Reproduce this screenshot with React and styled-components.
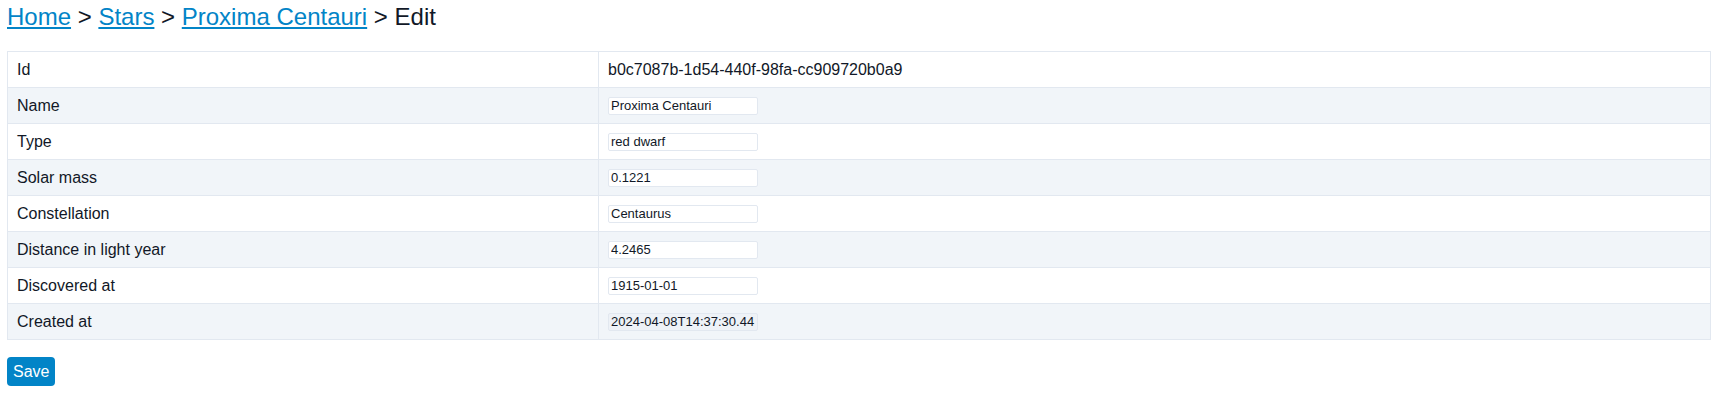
import React from "react";
import styled, { createGlobalStyle } from "styled-components";

const GlobalStyle = createGlobalStyle`
  body {
    margin: 0;
    background: #fff;
    font-family: "Liberation Sans", Arial, sans-serif;
    color: #111827;
  }
`;

const Page = styled.div`
  padding: 3px 7px 10px;
`;

const Breadcrumb = styled.div`
  font-size: 24px;
  line-height: 28px;
  color: #111827;

  a {
    color: #0284c7;
    text-decoration: underline;
    text-underline-offset: 2px;
  }
`;

const Table = styled.table`
  width: 100%;
  margin-top: 20px;
  border-collapse: collapse;
  border: 1px solid #e2e8f0;
  font-size: 16px;

  tr:nth-child(even) {
    background-color: #f1f5f9;
  }

  td {
    height: 35px;
    padding: 0 9px;
    border: 1px solid #e2e8f0;
    vertical-align: middle;
  }

  td:first-child {
    width: 572px;
  }
`;

const Field = styled.input`
  box-sizing: border-box;
  width: 150px;
  height: 18px;
  padding: 0 2px;
  border: 1px solid #e2e8f0;
  border-radius: 2px;
  font-family: "Liberation Sans", Arial, sans-serif;
  font-size: 13px;
  color: #111827;
  background: ${props => (props.readOnly ? "#eef2f7" : "#fff")};
  outline: none;
`;

const SaveButton = styled.button`
  margin-top: 17px;
  height: 29px;
  padding: 0 6px;
  border: none;
  border-radius: 4px;
  background-color: #0284c7;
  color: #fff;
  font-family: "Liberation Sans", Arial, sans-serif;
  font-size: 16px;
  cursor: pointer;
`;

const fields = [
  { label: "Name", value: "Proxima Centauri" },
  { label: "Type", value: "red dwarf" },
  { label: "Solar mass", value: "0.1221" },
  { label: "Constellation", value: "Centaurus" },
  { label: "Distance in light year", value: "4.2465" },
  { label: "Discovered at", value: "1915-01-01" },
  { label: "Created at", value: "2024-04-08T14:37:30.44", readOnly: true }
];

const App = () => {
  return (
    <Page>
      <GlobalStyle />
      <Breadcrumb>
        <a href="#">Home</a> &gt; <a href="#">Stars</a> &gt; <a href="#">Proxima Centauri</a> &gt; Edit
      </Breadcrumb>
      <Table>
        <tbody>
          <tr>
            <td>Id</td>
            <td>b0c7087b-1d54-440f-98fa-cc909720b0a9</td>
          </tr>
          {fields.map(field => (
            <tr key={field.label}>
              <td>{field.label}</td>
              <td>
                <Field defaultValue={field.value} readOnly={field.readOnly} />
              </td>
            </tr>
          ))}
        </tbody>
      </Table>
      <SaveButton>Save</SaveButton>
    </Page>
  );
};

export default App;
